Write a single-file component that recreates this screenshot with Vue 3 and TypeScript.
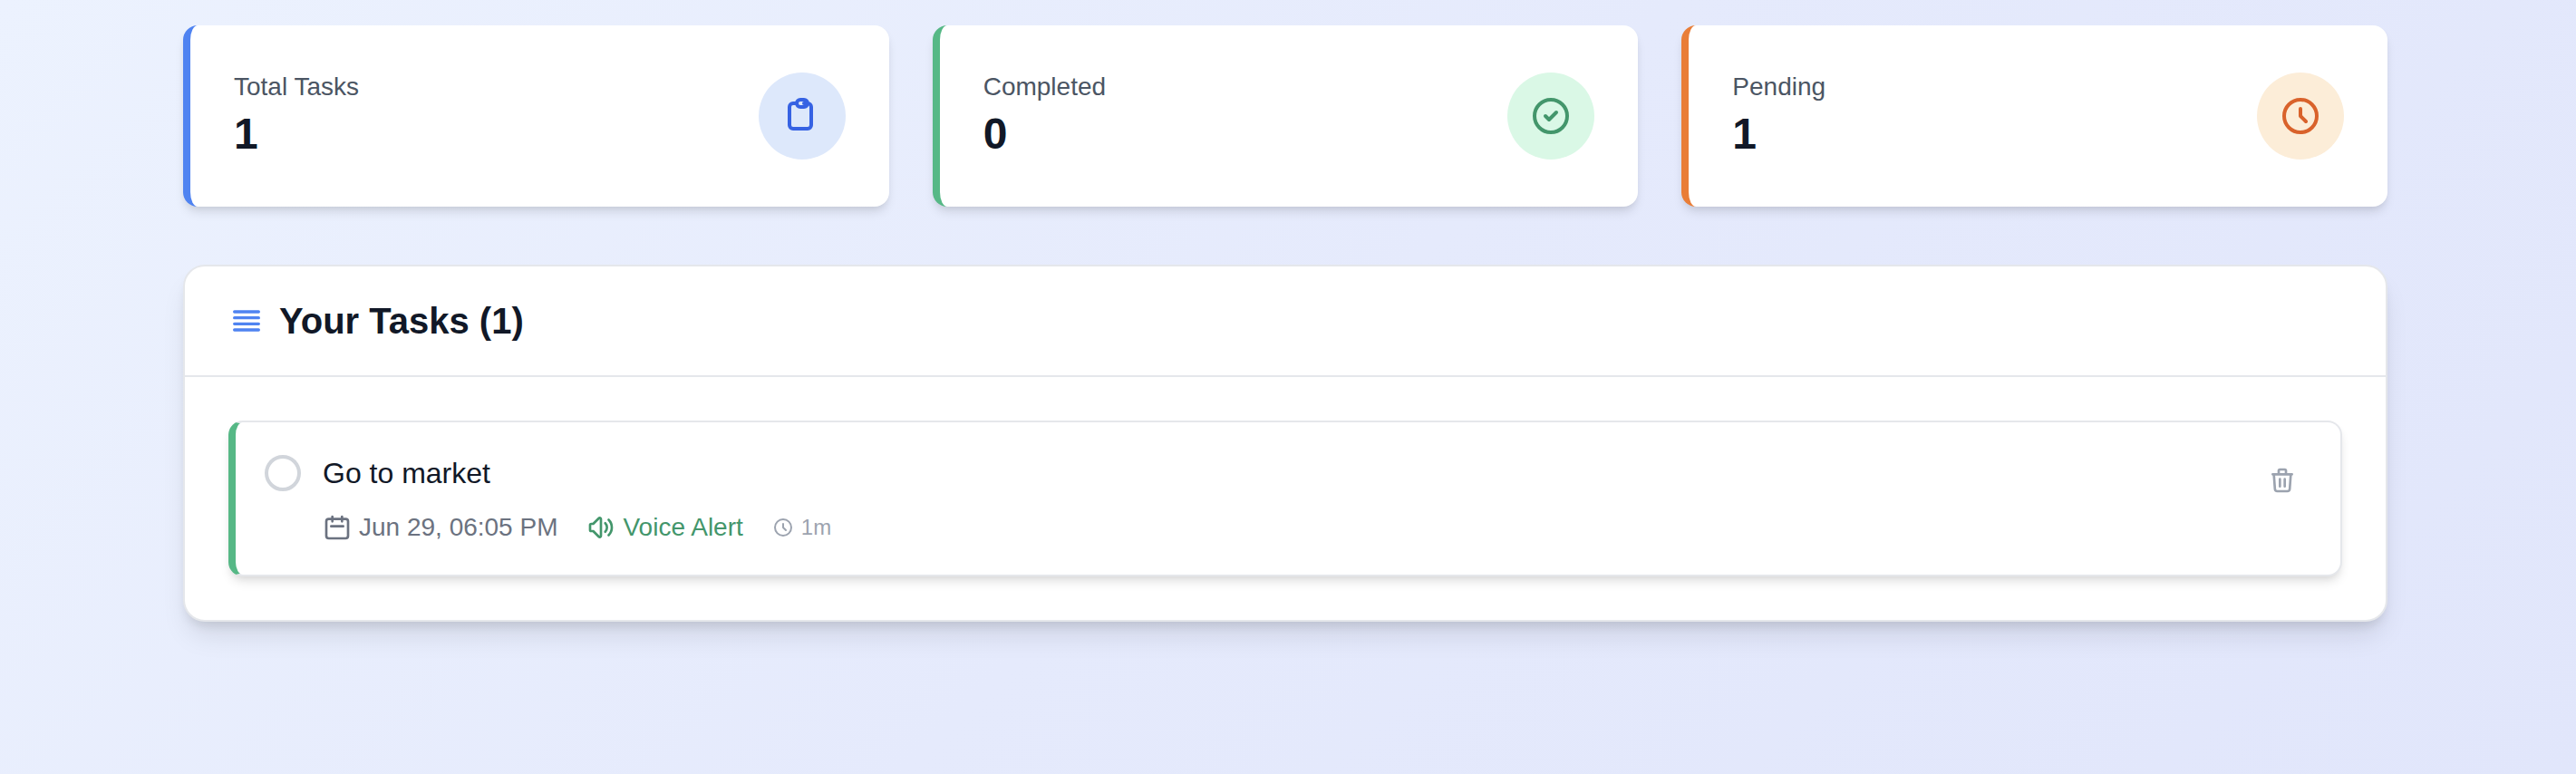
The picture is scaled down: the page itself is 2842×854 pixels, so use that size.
<script setup lang="ts">
import { computed, ref } from 'vue'

interface Task {
  id: number
  title: string
  due: string
  voiceAlert: boolean
  age: string
  done: boolean
}

const tasks = ref<Task[]>([
  { id: 1, title: 'Go to market', due: 'Jun 29, 06:05 PM', voiceAlert: true, age: '1m', done: false },
])

const completed = computed(() => tasks.value.filter((t) => t.done).length)

const stats = computed(() => [
  {
    key: 'total',
    label: 'Total Tasks',
    value: tasks.value.length,
    icon: 'M9 5H7a2 2 0 00-2 2v10a2 2 0 002 2h8a2 2 0 002-2V7a2 2 0 00-2-2h-2M9 5a2 2 0 002 2h2a2 2 0 002-2M9 5a2 2 0 012-2h2a2 2 0 012 2',
  },
  {
    key: 'completed',
    label: 'Completed',
    value: completed.value,
    icon: 'M9 12l2 2 4-4m6 2a9 9 0 11-18 0 9 9 0 0118 0z',
  },
  {
    key: 'pending',
    label: 'Pending',
    value: tasks.value.length - completed.value,
    icon: 'M12 8v4l3 3m6-3a9 9 0 11-18 0 9 9 0 0118 0z',
  },
])

function removeTask(id: number): void {
  tasks.value = tasks.value.filter((t) => t.id !== id)
}
</script>

<template>
  <div class="page">
    <main class="container">
      <section class="stats" aria-label="Task statistics">
        <article v-for="s in stats" :key="s.key" class="stat" :class="s.key">
          <div>
            <p class="stat-label">{{ s.label }}</p>
            <p class="stat-value">{{ s.value }}</p>
          </div>
          <div class="stat-badge">
            <svg class="icon icon-xl" viewBox="0 0 24 24" aria-hidden="true"><path :d="s.icon" /></svg>
          </div>
        </article>
      </section>

      <section class="panel">
        <header class="panel-header">
          <svg class="icon icon-lg" viewBox="0 0 24 24" aria-hidden="true">
            <path d="M4 6h16M4 10h16M4 14h16M4 18h16" />
          </svg>
          <h2>Your Tasks ({{ tasks.length }})</h2>
        </header>
        <ul class="list">
          <li v-for="t in tasks" :key="t.id" class="task">
            <input :id="`task-${t.id}`" v-model="t.done" class="check" type="checkbox" />
            <div class="task-body">
              <label class="task-title" :for="`task-${t.id}`">{{ t.title }}</label>
              <div class="meta">
                <span class="meta-item due">
                  <svg class="icon icon-md" viewBox="0 0 24 24" aria-hidden="true">
                    <path d="M8 7V3m8 4V3m-9 8h10M5 21h14a2 2 0 002-2V7a2 2 0 00-2-2H5a2 2 0 00-2 2v12a2 2 0 002 2z" />
                  </svg>
                  {{ t.due }}
                </span>
                <span v-if="t.voiceAlert" class="meta-item voice">
                  <svg class="icon icon-md" viewBox="0 0 24 24" aria-hidden="true">
                    <path
                      d="M15.536 8.464a5 5 0 010 7.072m2.828-9.9a9 9 0 010 12.728M5.586 15H4a1 1 0 01-1-1v-4a1 1 0 011-1h1.586l4.707-4.707C10.923 3.663 12 4.109 12 5v14c0 .891-1.077 1.337-1.707.707L5.586 15z"
                    />
                  </svg>
                  Voice Alert
                </span>
                <span class="meta-item age">
                  <svg class="icon icon-sm" viewBox="0 0 24 24" aria-hidden="true">
                    <path d="M12 8v4l3 3m6-3a9 9 0 11-18 0 9 9 0 0118 0z" />
                  </svg>
                  {{ t.age }}
                </span>
              </div>
            </div>
            <button class="delete" type="button" aria-label="Delete task" @click="removeTask(t.id)">
              <svg class="icon icon-md" viewBox="0 0 24 24" aria-hidden="true">
                <path
                  d="M19 7l-.867 12.142A2 2 0 0116.138 21H7.862a2 2 0 01-1.995-1.858L5 7m5 4v6m4-6v6m1-10V4a1 1 0 00-1-1h-4a1 1 0 00-1 1v3M4 7h16"
                />
              </svg>
            </button>
          </li>
        </ul>
      </section>
    </main>
  </div>
</template>

<style>
body {
  margin: 0;
}
</style>

<style scoped>
.page {
  box-sizing: border-box;
  min-height: 100vh;
  padding: 28px 6px 64px 0;
  background: linear-gradient(135deg, #ecf2fe 0%, #e5eafc 50%, #e1e6fb 100%);
  color: #111827;
  font-family: 'Liberation Sans', Arial, sans-serif;
}

.container {
  box-sizing: border-box;
  max-width: 2560px;
  margin: 0 auto;
  padding: 0 64px;
}

.icon {
  flex: none;
  fill: none;
  stroke: currentColor;
  stroke-width: 2;
  stroke-linecap: round;
  stroke-linejoin: round;
}

.icon-sm {
  width: 24px;
  height: 24px;
}

.icon-md {
  width: 32px;
  height: 32px;
}

.icon-lg {
  width: 40px;
  height: 40px;
}

.icon-xl {
  width: 48px;
  height: 48px;
}

.stats {
  display: grid;
  grid-template-columns: repeat(3, 1fr);
  gap: 48px;
  margin-bottom: 64px;
}

.stat {
  display: flex;
  align-items: center;
  justify-content: space-between;
  padding: 48px;
  border-left: 8px solid var(--edge);
  border-radius: 16px;
  background: #fff;
  box-shadow: 0 8px 12px -2px rgba(0, 0, 0, 0.1), 0 4px 8px -4px rgba(0, 0, 0, 0.1);
}

.total {
  --edge: #4f83f1;
  --tint: #dde8fb;
  --ink: #3662e3;
}

.completed {
  --edge: #56b886;
  --tint: #daf8e6;
  --ink: #43966b;
}

.pending {
  --edge: #e97d37;
  --tint: #fcedd8;
  --ink: #d9622b;
}

.stat p {
  margin: 0;
}

.stat-label {
  color: #4b5563;
  font-size: 28px;
  line-height: 40px;
}

.stat-value {
  font-size: 48px;
  font-weight: 700;
  line-height: 64px;
}

.stat-badge {
  display: flex;
  padding: 24px;
  border-radius: 50%;
  background: var(--tint);
  color: var(--ink);
}

.panel {
  border: 2px solid #e5e7eb;
  border-radius: 24px;
  background: #fff;
  box-shadow: 0 20px 30px -6px rgba(0, 0, 0, 0.1), 0 8px 12px -4px rgba(0, 0, 0, 0.1);
}

.panel-header {
  display: flex;
  align-items: center;
  gap: 16px;
  padding: 32px 48px;
  border-bottom: 2px solid #e5e7eb;
}

.panel-header .icon {
  color: #4f83f1;
}

.panel-header h2 {
  margin: 0;
  font-size: 40px;
  font-weight: 700;
  line-height: 56px;
}

.list {
  margin: 0;
  padding: 48px;
  list-style: none;
}

.task {
  display: flex;
  align-items: flex-start;
  padding: 32px;
  border: 2px solid #e5e7eb;
  border-left: 8px solid #56b886;
  border-radius: 16px;
  background: #fff;
  box-shadow: 0 8px 12px -2px rgba(0, 0, 0, 0.1), 0 4px 8px -4px rgba(0, 0, 0, 0.1);
}

.check {
  box-sizing: border-box;
  flex: none;
  width: 40px;
  height: 40px;
  margin: 4px 24px 0 0;
  border: 4px solid #d1d5db;
  border-radius: 50%;
  appearance: none;
  cursor: pointer;
}

.check:checked {
  border-color: #56b886;
  background: #56b886;
}

.task-body {
  flex: 1;
  min-width: 0;
}

.task-title {
  display: block;
  font-size: 32px;
  line-height: 48px;
}

.meta {
  display: flex;
  align-items: center;
  gap: 32px;
  margin-top: 16px;
}

.meta-item {
  display: flex;
  align-items: center;
  gap: 8px;
  font-size: 28px;
  line-height: 40px;
}

.due {
  color: #6b7280;
}

.voice {
  color: #43966b;
}

.age {
  color: #9ca3af;
  font-size: 24px;
  line-height: 32px;
}

.delete {
  display: flex;
  padding: 16px;
  border: 0;
  border-radius: 12px;
  background: none;
  color: #9ca3af;
  cursor: pointer;
}
</style>
